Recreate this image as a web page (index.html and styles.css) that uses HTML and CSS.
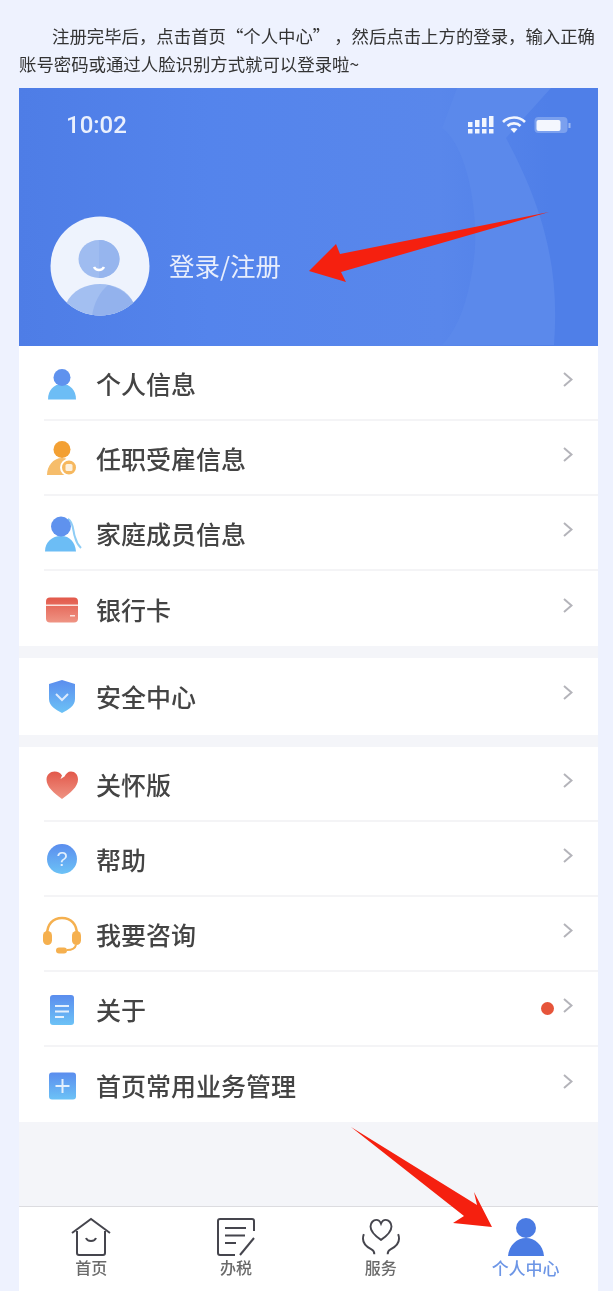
FILE: index.html
```html
<!DOCTYPE html>
<html lang="zh-CN">
<head>
    <meta charset="UTF-8">
    <meta name="viewport" content="width=device-width, initial-scale=1.0">
    <title>个人中心</title>
    <link rel="stylesheet" href="styles.css">
</head>
<body>

    <svg class="defs" width="0" height="0">
        <defs>
            <linearGradient id="blue" x1="0" y1="0" x2="0" y2="1">
                <stop offset="0" stop-color="#5b8dee"/>
                <stop offset="1" stop-color="#6cc2f6"/>
            </linearGradient>
            <linearGradient id="red" x1="0" y1="0" x2="0" y2="1">
                <stop offset="0" stop-color="#e2584a"/>
                <stop offset="1" stop-color="#ef9484"/>
            </linearGradient>
        </defs>
    </svg>

    <p class="intro">注册完毕后，点击首页“个人中心” ，然后点击上方的登录，输入正确账号密码或通过人脸识别方式就可以登录啦~</p>

    <div class="phone">
        <div class="header">
            <svg class="header-bg" viewBox="0 0 579 257" width="579" height="257">
                <path d="M438 0L423 40C450 60 460 130 455 170C450 210 440 240 423 257H535C540 190 530 130 487 50L532 0Z" fill="#5b89eb"/>
            </svg>
            <div class="status">
                <span class="time">10:02</span>
                <div class="status-icons">
                    <svg width="26" height="20" viewBox="0 0 26 20" fill="#f2f6fe">
                        <rect x="0" y="7" width="4.500" height="5"/><rect x="0" y="14" width="4.500" height="4.500"/>
                        <rect x="7" y="5" width="4.500" height="7"/><rect x="7" y="14" width="4.500" height="4.500"/>
                        <rect x="14" y="3" width="4.500" height="9"/><rect x="14" y="14" width="4.500" height="4.500"/>
                        <rect x="21" y="1" width="4.500" height="11"/><rect x="21" y="14" width="4.500" height="4.500"/>
                    </svg>
                    <svg width="24" height="20" viewBox="0 0 24 20" fill="none" stroke="#f2f6fe" stroke-width="2.600">
                        <path d="M1 7C7 1 17 1 23 7"/>
                        <path d="M5.500 11C9 7.500 15 7.500 18.500 11"/>
                        <path d="M12 18L8.500 14C10.500 12.500 13.500 12.500 15.500 14Z" fill="#f2f6fe" stroke="none"/>
                    </svg>
                    <svg width="37" height="20" viewBox="0 0 37 20">
                        <rect x="0.500" y="2" width="33" height="16" rx="4" fill="#7ba0ee"/>
                        <rect x="2.500" y="5" width="24" height="11" rx="2" fill="#f4f7fe"/>
                        <rect x="34.500" y="8" width="2" height="5" fill="#9db9f1"/>
                    </svg>
                </div>
            </div>
            <div class="user">
                <svg class="avatar" viewBox="0 0 100 100" width="100" height="100">
                    <defs><clipPath id="round"><circle cx="50" cy="50" r="49.500"/></clipPath></defs>
                    <circle cx="50" cy="50" r="49.500" fill="#eef3fd"/>
                    <ellipse cx="49" cy="43" rx="20.500" ry="19" fill="#9fbcf0"/>
                    <path d="M49 24C60 24 69.500 32 69.500 43C69.500 54 60 62 49 62Z" fill="#96b5ee"/>
                    <path d="M44 51C46 55 52 55 54 51" fill="none" stroke="#fff" stroke-width="2.500"/>
                    <path d="M16 100V88C22 74 36 68 50 68C64 68 78 74 84 88V100Z" fill="#a3bff1" clip-path="url(#round)"/>
                    <path d="M42 100C44 86 50 76 58 69C66 71 78 76 84 88V100Z" fill="#93b2ed" clip-path="url(#round)"/>
                </svg>
                <span class="login">登录/注册</span>
            </div>
        </div>

        <div class="group">
            <div class="row">
                <svg class="row-icon" viewBox="0 0 40 40">
                    <path d="M6 36.500C6 27 12 21 20 21C28 21 34 27 34 36.500Z" fill="#6dbdf5"/>
                    <circle cx="20" cy="14.500" r="8.500" fill="#5f92ee"/>
                </svg>
                <span class="row-label">个人信息</span>
                <svg class="chevron" viewBox="0 0 10 15"><path d="M1 1L8.500 7.500L1 14"/></svg>
            </div>
            <div class="row">
                <svg class="row-icon" viewBox="0 0 40 40">
                    <path d="M5 37C5 28 11 20 20 20C29 20 31 28 31 37Z" fill="#f6bd6b"/>
                    <circle cx="20" cy="11.500" r="8.500" fill="#f3a033"/>
                    <circle cx="27" cy="29.500" r="8" fill="#f6b85f" stroke="#fff" stroke-width="2"/>
                    <rect x="23.500" y="26" width="7" height="7" rx="1.500" fill="#fdf0dc"/>
                </svg>
                <span class="row-label">任职受雇信息</span>
                <svg class="chevron" viewBox="0 0 10 15"><path d="M1 1L8.500 7.500L1 14"/></svg>
            </div>
            <div class="row">
                <svg class="row-icon" viewBox="0 0 40 40">
                    <path d="M26 6C32 9 31 20 33 24C34 28 36 32 39 35" fill="none" stroke="#8fcdf5" stroke-width="2"/>
                    <path d="M3 38.500C3 29 10 23 19 23C28 23 33 29 34 38.500Z" fill="#6cbdf5"/>
                    <circle cx="19" cy="13.500" r="10" fill="#5f92ee"/>
                </svg>
                <span class="row-label">家庭成员信息</span>
                <svg class="chevron" viewBox="0 0 10 15"><path d="M1 1L8.500 7.500L1 14"/></svg>
            </div>
            <div class="row">
                <svg class="row-icon" viewBox="0 0 40 40">
                    <rect x="4" y="8.500" width="32" height="25" rx="4" fill="url(#red)"/>
                    <rect x="4" y="15.500" width="32" height="1.500" fill="#fbe3de"/>
                    <rect x="28" y="26" width="5" height="1.500" fill="#fbe3de"/>
                </svg>
                <span class="row-label">银行卡</span>
                <svg class="chevron" viewBox="0 0 10 15"><path d="M1 1L8.500 7.500L1 14"/></svg>
            </div>
        </div>

        <div class="group">
            <div class="row row-tall">
                <svg class="row-icon" viewBox="0 0 40 40">
                    <path d="M20 4L33 8V23C33 30 26 34 20 37C14 34 7 30 7 23V8Z" fill="url(#blue)"/>
                    <path d="M14 18L20 24L26 18" fill="none" stroke="#dceafd" stroke-width="2"/>
                </svg>
                <span class="row-label">安全中心</span>
                <svg class="chevron" viewBox="0 0 10 15"><path d="M1 1L8.500 7.500L1 14"/></svg>
            </div>
        </div>

        <div class="group">
            <div class="row">
                <svg class="row-icon" viewBox="0 0 40 40">
                    <path d="M20 35C12 29 4.500 23 4.500 15.500C4.500 10.500 8.500 7.500 12.500 7.500C16 7.500 18.500 9 20 11.500L18.500 15L22.500 12.500C24 9.500 26 7.500 29 7.500C33 7.500 36 10.500 36 15.500C36 23 28 29 20 35Z" fill="url(#red)"/>
                </svg>
                <span class="row-label">关怀版</span>
                <svg class="chevron" viewBox="0 0 10 15"><path d="M1 1L8.500 7.500L1 14"/></svg>
            </div>
            <div class="row">
                <svg class="row-icon" viewBox="0 0 40 40">
                    <circle cx="20" cy="20" r="15" fill="url(#blue)"/>
                    <text class="help-mark" x="20" y="27" text-anchor="middle">?</text>
                </svg>
                <span class="row-label">帮助</span>
                <svg class="chevron" viewBox="0 0 10 15"><path d="M1 1L8.500 7.500L1 14"/></svg>
            </div>
            <div class="row">
                <svg class="row-icon" viewBox="0 0 40 40">
                    <path d="M5 21C5 10 11 4 20 4C29 4 35 10 35 21" fill="none" stroke="#f5b04f" stroke-width="2.500"/>
                    <rect x="1" y="17" width="9" height="14" rx="4.500" fill="#f5b04f"/>
                    <rect x="30" y="17" width="9" height="14" rx="4.500" fill="#f5b04f"/>
                    <path d="M34 31C33 35 29 36 25 36" fill="none" stroke="#f5b04f" stroke-width="2"/>
                    <rect x="14" y="33.500" width="11" height="6" rx="3" fill="#f5b04f"/>
                </svg>
                <span class="row-label">我要咨询</span>
                <svg class="chevron" viewBox="0 0 10 15"><path d="M1 1L8.500 7.500L1 14"/></svg>
            </div>
            <div class="row">
                <svg class="row-icon" viewBox="0 0 40 40">
                    <rect x="8" y="6" width="24" height="30" rx="3" fill="url(#blue)"/>
                    <path d="M13 17H27M13 22.500H27M13 28H22" stroke="#e4f0fd" stroke-width="1.800"/>
                </svg>
                <span class="row-label">关于</span>
                <span class="dot"></span>
                <svg class="chevron" viewBox="0 0 10 15"><path d="M1 1L8.500 7.500L1 14"/></svg>
            </div>
            <div class="row">
                <svg class="row-icon" viewBox="0 0 40 40">
                    <rect x="7" y="7.500" width="27" height="27" rx="3" fill="url(#blue)"/>
                    <path d="M13.500 21H27.500M20.500 14V28" stroke="#e4f0fd" stroke-width="2"/>
                </svg>
                <span class="row-label">首页常用业务管理</span>
                <svg class="chevron" viewBox="0 0 10 15"><path d="M1 1L8.500 7.500L1 14"/></svg>
            </div>
        </div>

        <div class="spacer"></div>

        <div class="tabbar">
            <div class="tab">
                <svg class="tab-icon" viewBox="0 0 40 40">
                    <path d="M1 16L20 2L39 16"/>
                    <path d="M6 14V36C6 37.500 7 38 8 38H32C33 38 34 37.500 34 36V14"/>
                    <path d="M15 21C16.500 25 23.500 25 25 21"/>
                </svg>
                <span class="tab-label">首页</span>
            </div>
            <div class="tab">
                <svg class="tab-icon" viewBox="0 0 40 40">
                    <path d="M38 14V4C38 3 37 2 36 2H4C3 2 2 3 2 4V36C2 37 3 38 4 38H19"/>
                    <path d="M9 11H30M9 18.500H29M9 26H20"/>
                    <path d="M24 38L38 21"/>
                </svg>
                <span class="tab-label">办税</span>
            </div>
            <div class="tab">
                <svg class="tab-icon" viewBox="0 0 42 40">
                    <path d="M21 23C15 19 10 14 10 9C10 5 13 2 16 2C18.500 2 20 3.500 21 6C22 3.500 23.500 2 26 2C29 2 32 5 32 9C32 14 27 19 21 23Z"/>
                    <path d="M3 17C0 25 5 30 11 33C13 34 14 36 14 38"/>
                    <path d="M39 17C42 25 37 30 31 33C29 34 28 36 28 38"/>
                </svg>
                <span class="tab-label">服务</span>
            </div>
            <div class="tab active">
                <svg class="tab-icon" viewBox="0 0 40 40">
                    <circle cx="20" cy="11" r="10" fill="#4a7be3"/>
                    <path d="M2 39C3 28 11 21 20 21C29 21 37 28 38 39Z" fill="#4a7be3"/>
                </svg>
                <span class="tab-label">个人中心</span>
            </div>
        </div>
    </div>

    <!-- red arrows drawn on top of the screenshot -->
    <svg class="arrows" viewBox="0 0 613 1291" width="613" height="1291">
        <path d="M549 212L340 254L336 244L309 271L346 282L341 272Z"/>
        <path d="M351 1127L477 1205L474 1192L492 1227L453 1223L464 1216Z"/>
    </svg>

</body>
</html>
```

FILE: styles.css
```css
html, body {
    height: 1291px;
    overflow: hidden;
}
body {
    position: relative;
    margin: 0;
    padding: 22px 13px 0 19px;
    box-sizing: border-box;
    background: #eef2fe;
    font-family: "Noto Sans CJK SC", "Noto Sans", sans-serif;
}
.defs {
    position: absolute;
}
.intro {
    margin: 0 0 10px;
    font-family: "Noto Sans CJK TC", "Noto Sans", sans-serif;
    font-size: 17.400px;
    line-height: 28px;
    text-indent: 33px;
    color: #333;
    filter: blur(0.5px);
}
.phone {
    display: flex;
    flex-direction: column;
    width: 579px;
    height: 1203px;
    background: #f4f5f9;
    filter: blur(0.7px);
}
.header {
    position: relative;
    height: 258px;
    flex: none;
    padding: 24px 27px 0 31px;
    box-sizing: border-box;
    background: linear-gradient(90deg, #4e7de6 0, #5484ec 190px, #5987eb 420px, #4f7fe8 530px);
    overflow: hidden;
}
.header-bg {
    position: absolute;
    left: 0;
    top: 0;
}
.status {
    position: relative;
    display: flex;
    justify-content: space-between;
    align-items: center;
    height: 26px;
    padding-left: 16px;
}
.time {
    font-family: Roboto, sans-serif;
    font-size: 24px;
    font-weight: 500;
    color: #eaf0fd;
}
.status-icons {
    display: flex;
    align-items: center;
    gap: 8px;
}
.user {
    position: relative;
    display: flex;
    align-items: center;
    gap: 19px;
    margin-top: 78px;
}
.avatar {
    flex: none;
}
.login {
    margin-top: -4px;
    font-size: 25.500px;
    color: #e8eefc;
}
.group {
    flex: none;
    margin-bottom: 12px;
    background: #fff;
}
.row {
    display: flex;
    align-items: center;
    gap: 14px;
    height: 75px;
    margin-left: 25px;
    padding-right: 25px;
    box-sizing: border-box;
    border-bottom: 2px solid #f4f4f6;
}
.row:last-child {
    border-bottom: none;
}
.row-tall {
    height: 77px;
    padding-bottom: 2px;
}
.row-icon {
    flex: none;
    width: 40px;
    height: 40px;
    margin-left: -2px;
}
.row-label {
    flex: 1;
    font-size: 25px;
    font-weight: 500;
    color: #444;
}
.help-mark {
    font-family: "Liberation Sans", sans-serif;
    font-size: 20px;
    fill: #e4f0fd;
}
.chevron {
    flex: none;
    width: 10px;
    height: 15px;
    margin-top: -6px;
    fill: none;
    stroke: #b4b4ba;
    stroke-width: 2;
}
.dot {
    flex: none;
    width: 13px;
    height: 13px;
    margin-right: -5px;
    border-radius: 50%;
    background: #e6543a;
}
.spacer {
    flex: 1;
}
.tabbar {
    display: flex;
    flex: none;
    height: 85px;
    padding-top: 10px;
    box-sizing: border-box;
    border-top: 1px solid #dcdce0;
    background: #fff;
}
.tab {
    display: flex;
    flex: 1;
    flex-direction: column;
    align-items: center;
    gap: 0;
}
.tab-icon {
    width: 40px;
    height: 40px;
    fill: none;
    stroke: #45454d;
    stroke-width: 2;
}
.tab.active .tab-icon {
    stroke: none;
}
.tab-label {
    font-size: 16px;
    font-weight: 500;
    line-height: 21px;
    color: #6a6a6a;
}
.tab.active .tab-label {
    font-size: 17px;
    color: #6d96e6;
}
.arrows {
    position: absolute;
    left: 0;
    top: 0;
    fill: #f5200f;
    filter: blur(0.4px);
    pointer-events: none;
}
```
